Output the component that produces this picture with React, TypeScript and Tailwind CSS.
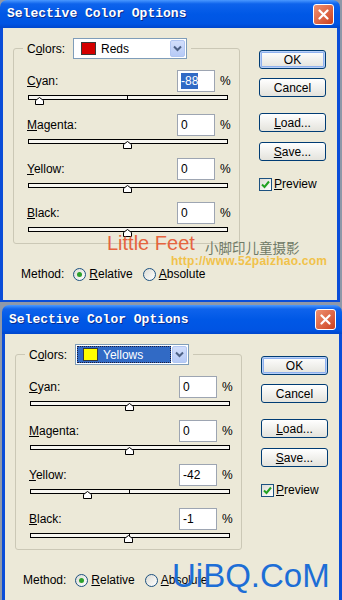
import React from "react";

type Row = { label: string; value: number; selected?: boolean };

const sans = "font-['Liberation_Sans',Arial,sans-serif]";

function Slider({ value }: { value: number }) {
  // one pixel per percent, zero sits on the centre tick
  const left = 98 + value - 4.5;
  return (
    <div className="relative ml-px mt-[3px] h-[5px] w-[200px] border border-black bg-[#F7F6F1]">
      {value !== 0 && <div className="absolute left-[98px] top-0 h-full w-px bg-black" />}
      <svg className="absolute top-[1px]" style={{ left }} width="9" height="8" viewBox="0 0 9 8">
        <path d="M4.5 0.5 L8.5 3.5 V7.5 H0.5 V3.5 Z" fill="#fff" stroke="#000" strokeWidth="1" />
      </svg>
    </div>
  );
}

function SliderRow({ row }: { row: Row }) {
  return (
    <div className="flex flex-col">
      <div className="flex h-[22px] items-center">
        <span className="flex-1">
          <u>{row.label[0]}</u>
          {row.label.slice(1)}:
        </span>
        <div className="flex h-[22px] w-[38px] items-center border border-[#9DA5B2] bg-white pl-[3px]">
          {row.selected ? (
            <span className="bg-[#316AC5] leading-[16px] text-white">{row.value}</span>
          ) : (
            row.value
          )}
        </div>
        <span className="ml-[5px] w-[10px]">%</span>
      </div>
      <Slider value={row.value} />
    </div>
  );
}

function Button({ children, primary }: { children: React.ReactNode; primary?: boolean }) {
  return (
    <div
      className={`flex h-[19px] w-[67px] items-center justify-center rounded-[3px] border border-[#003C74] bg-gradient-to-b from-white to-[#E4E3DC] ${
        primary ? "shadow-[inset_0_0_0_1px_#B9D0F7,inset_0_0_0_2px_#8FB1EE]" : ""
      }`}
    >
      {children}
    </div>
  );
}

function Radio({ on, children }: { on?: boolean; children: React.ReactNode }) {
  return (
    <div className="flex items-center">
      <div className="flex h-[13px] w-[13px] items-center justify-center rounded-full border border-[#1C5180] bg-gradient-to-br from-[#DCDCD5] to-white">
        {on && <div className="h-[5px] w-[5px] rounded-full bg-[#2CA12C]" />}
      </div>
      <span className="ml-[3px]">{children}</span>
    </div>
  );
}

function Dropdown({ name, swatch, highlight }: { name: string; swatch: string; highlight?: boolean }) {
  return (
    <div className="ml-[8px] flex h-[21px] w-[114px] items-center border border-[#7F9DB9] bg-white p-px">
      <div
        className={`mr-px flex h-full flex-1 items-center ${
          highlight ? "border border-dotted border-[#1B1B3A] bg-[#316AC5] text-white" : ""
        }`}
      >
        <span
          className={`h-[13px] w-[15px] border border-[#3A3A3A] ${highlight ? "ml-[5px]" : "ml-[6px]"}`}
          style={{ background: swatch }}
        />
        <span className="ml-[5px]">{name}</span>
      </div>
      <div className="flex h-full w-[15px] items-center justify-center rounded-[2px] border border-[#B1C6F2] bg-gradient-to-b from-[#D2DEFB] to-[#B6CAF6]">
        <svg width="9" height="7" viewBox="0 0 9 7">
          <path d="M1 1.5 L4.5 5 L8 1.5" fill="none" stroke="#4D6185" strokeWidth="2" />
        </svg>
      </div>
    </div>
  );
}

function Dialog({
  rows,
  color,
  swatch,
  highlight,
  className,
  titleH,
}: {
  rows: Row[];
  color: string;
  swatch: string;
  highlight?: boolean;
  className?: string;
  titleH: string;
}) {
  return (
    <div className={`w-[340px] shrink-0 ${className ?? ""}`}>
      <div
        className={`flex ${titleH} items-center rounded-t-[7px] bg-[linear-gradient(180deg,#4A98FF_0%,#0E63EC_14%,#0058E6_50%,#0054E3_85%,#0046CC_100%)] pl-[7px] pr-[6px]`}
      >
        <span className="flex-1 font-['Liberation_Mono',monospace] text-[13px] font-bold text-white [text-shadow:1px_1px_0_#0A2C8C]">
          Selective Color Options
        </span>
        <div className="flex h-[21px] w-[21px] items-center justify-center rounded-[3px] border border-white bg-gradient-to-br from-[#EE9070] to-[#CC3E1A]">
          <svg width="11" height="11" viewBox="0 0 11 11">
            <path d="M1.5 1.5 L9.5 9.5 M9.5 1.5 L1.5 9.5" stroke="#fff" strokeWidth="2.2" strokeLinecap="round" />
          </svg>
        </div>
      </div>
      <div className="flex h-[274px] border-x-[3px] border-b-2 border-[#0A4DD8] bg-[#ECE9D8] pl-[10px] pt-[10px]">
        <div className="flex w-[227px] flex-col">
          <fieldset className="rounded-[3px] border border-[#CBC8B6] pb-[11px] pl-[13px] pr-[9px] pt-[11px]">
            <legend className="ml-[-4px] px-[4px]">
              <div className="flex h-[21px] items-center">
                <span>
                  C<u>o</u>lors:
                </span>
                <Dropdown name={color} swatch={swatch} highlight={highlight} />
              </div>
            </legend>
            <div className="flex flex-col gap-[14px]">
              {rows.map((r) => (
                <SliderRow key={r.label} row={r} />
              ))}
            </div>
          </fieldset>
          <div className="ml-[8px] mt-[22px] flex h-[16px] items-center">
            <span>Method:</span>
            <div className="ml-[9px]">
              <Radio on>
                <u>R</u>elative
              </Radio>
            </div>
            <div className="ml-[10px]">
              <Radio>
                <u>A</u>bsolute
              </Radio>
            </div>
          </div>
        </div>
        <div className="ml-[19px] mt-[12px] flex flex-col">
          <Button primary>OK</Button>
          <div className="mt-[9px]">
            <Button>Cancel</Button>
          </div>
          <div className="mt-[16px]">
            <Button>
              <span>
                <u>L</u>oad...
              </span>
            </Button>
          </div>
          <div className="mt-[10px]">
            <Button>
              <span>
                <u>S</u>ave...
              </span>
            </Button>
          </div>
          <div className="mt-[14px] flex items-center">
            <div className="flex h-[13px] w-[13px] items-center justify-center border border-[#1C5180] bg-gradient-to-br from-[#DCDCD5] to-white">
              <svg width="9" height="9" viewBox="0 0 9 9">
                <path d="M1 4.5 L3.5 7 L8 1.5" fill="none" stroke="#21A121" strokeWidth="2" />
              </svg>
            </div>
            <span className="ml-[2px]">
              <u>P</u>review
            </span>
          </div>
        </div>
      </div>
    </div>
  );
}

export default function App() {
  return (
    <div className={`relative h-[600px] w-[342px] overflow-hidden bg-[#8F98A8] text-[12px] text-black ${sans}`}>
      <Dialog
        titleH="h-[28px]"
        color="Reds"
        swatch="#D40000"
        rows={[
          { label: "Cyan", value: -88, selected: true },
          { label: "Magenta", value: 0 },
          { label: "Yellow", value: 0 },
          { label: "Black", value: 0 },
        ]}
      />
      <div className="h-[3px]" />
      <Dialog
        titleH="h-[29px]"
        className="ml-[2px]"
        color="Yellows"
        swatch="#FFFF00"
        highlight
        rows={[
          { label: "Cyan", value: 0 },
          { label: "Magenta", value: 0 },
          { label: "Yellow", value: -42 },
          { label: "Black", value: -1 },
        ]}
      />

      {/* watermarks laid over the dialogs */}
      <span className="absolute left-[107px] top-[233px] text-[20px] leading-none text-[#E5643F]">Little Feet</span>
      <span className="absolute left-[205px] top-[240px] font-['Noto_Sans_CJK_SC',sans-serif] text-[13.5px] leading-[14px] text-[#6F7A66]">
        小脚印儿童摄影
      </span>
      <span className="absolute left-[171px] top-[255px] text-[12px] font-bold leading-[12px] tracking-[0.25px] text-[#F1C24A]">
        http://www.52paizhao.com
      </span>
      <span className="absolute left-[172px] top-[559px] text-[33px] leading-none text-[#1D6ED6]">UiBQ.CoM</span>
    </div>
  );
}
